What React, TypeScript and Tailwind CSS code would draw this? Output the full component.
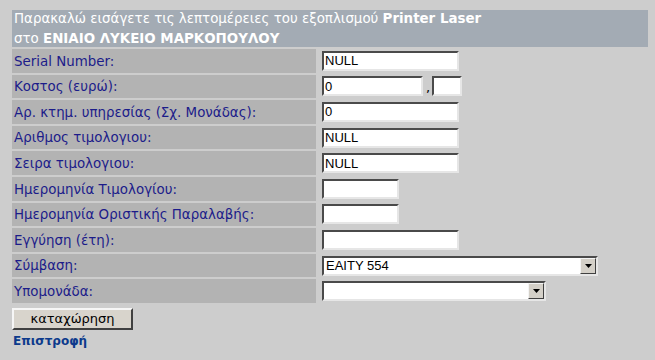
import React from 'react';

const rows: { label: string; field: React.ReactNode }[] = [];

function TextBox({ value = '', w }: { value?: string; w: string }) {
  return (
    <div
      className={`${w} h-[20px] bg-white border-2 border-t-[#4a4a4a] border-l-[#4a4a4a] border-b-[#e6e6e6] border-r-[#e6e6e6] flex items-center pl-[1px] text-[13px] text-black leading-none`}
      style={{ fontFamily: '"Liberation Sans", Arial, sans-serif' }}
    >
      {value}
    </div>
  );
}

function Combo({ value = '', w }: { value?: string; w: string }) {
  return (
    <div
      className={`${w} h-[20px] bg-white border-2 border-t-[#4a4a4a] border-l-[#4a4a4a] border-b-[#e6e6e6] border-r-[#e6e6e6] flex items-stretch text-[13px] text-black leading-none`}
      style={{ fontFamily: '"Liberation Sans", Arial, sans-serif' }}
    >
      <div className="flex-1 flex items-center pl-[2px]">{value}</div>
      <div className="w-[16px] bg-[#d4d0c8] border border-t-[#f4f4f4] border-l-[#f4f4f4] border-b-[#404040] border-r-[#404040] flex items-center justify-center">
        <svg width="7" height="4" viewBox="0 0 7 4">
          <path d="M0 0h7L3.5 4z" fill="#000" />
        </svg>
      </div>
    </div>
  );
}

rows.push(
  { label: 'Serial Number:', field: <TextBox value="NULL" w="w-[137px]" /> },
  {
    label: 'Κοστος (ευρώ):',
    field: (
      <div className="flex items-end">
        <TextBox value="0" w="w-[101px]" />
        <span className="w-[9px] text-[13px] text-black leading-none pl-[3px] pb-[2px]">,</span>
        <TextBox w="w-[30px]" />
      </div>
    ),
  },
  { label: 'Αρ. κτημ. υπηρεσίας (Σχ. Μονάδας):', field: <TextBox value="0" w="w-[137px]" /> },
  { label: 'Αριθμος τιμολογιου:', field: <TextBox value="NULL" w="w-[137px]" /> },
  { label: 'Σειρα τιμολογιου:', field: <TextBox value="NULL" w="w-[137px]" /> },
  { label: 'Ημερομηνία Τιμολογίου:', field: <TextBox w="w-[77px]" /> },
  { label: 'Ημερομηνία Οριστικής Παραλαβής:', field: <TextBox w="w-[77px]" /> },
  { label: 'Εγγύηση (έτη):', field: <TextBox w="w-[137px]" /> },
  { label: 'Σύμβαση:', field: <Combo value="EAITY 554" w="w-[276px]" /> },
  { label: 'Υπομονάδα:', field: <Combo w="w-[224px]" /> },
);

export default function App() {
  return (
    <div
      className="w-[655px] h-[360px] bg-[#cdcdcd] overflow-hidden pt-[10px] px-[12px]"
      style={{ fontFamily: '"DejaVu Sans", Verdana, sans-serif' }}
    >
      <div className="w-[636px] grid grid-cols-[304px_1fr] gap-[2px]">
        <div className="col-span-2 h-[37px] bg-[#a3abb4] text-white text-[13.4px] leading-[20px] pl-[2px] flex flex-col justify-center">
          <div>
            Παρακαλώ εισάγετε τις λεπτομέρειες του εξοπλισμού <b>Printer Laser</b>
          </div>
          <div>
            στο <b>ΕΝΙΑΙΟ ΛΥΚΕΙΟ ΜΑΡΚΟΠΟΥΛΟΥ</b>
          </div>
        </div>
        {rows.map((r) => (
          <React.Fragment key={r.label}>
            <div className="h-[23.6px] bg-[#b3b3b3] text-[#1c1c8a] text-[13.4px] leading-none pl-[2px] pt-[1px] flex items-center">
              {r.label}
            </div>
            <div className="h-[23.6px] pl-[4px] flex items-center">{r.field}</div>
          </React.Fragment>
        ))}
      </div>
      <button className="mt-[5px] w-[121px] h-[22px] bg-[#d8d4cc] border-2 border-t-[#f6f6f6] border-l-[#f6f6f6] border-b-[#404040] border-r-[#404040] text-[13px] text-black leading-none flex items-center justify-center">
        καταχώρηση
      </button>
      <div className="mt-[5px] pl-[1px] text-[12px] font-bold text-[#0c3a8c] leading-none">Επιστροφή</div>
    </div>
  );
}
